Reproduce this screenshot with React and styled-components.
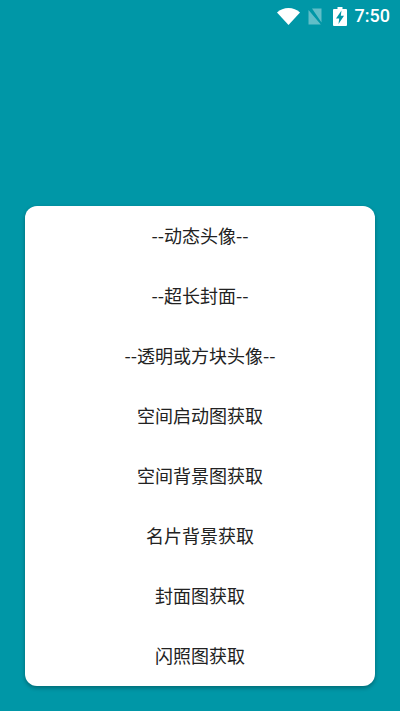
import React from "react";
import styled, { createGlobalStyle } from "styled-components";

const Global = createGlobalStyle`
  html, body { margin: 0; padding: 0; height: 100%; background: #0097a7; }
  #root { height: 100%; }
`;

const Screen = styled.div`
  width: 400px;
  height: 711px;
  background: #0097a7;
  display: flex;
  flex-direction: column;
  overflow: hidden;
  font-family: "Roboto", "Noto Sans CJK SC", sans-serif;
`;

const StatusBar = styled.div`
  height: 32px;
  flex: none;
  display: flex;
  align-items: center;
  justify-content: flex-end;
  padding-right: 10px;
  color: #fff;
`;

const StatusIcon = styled.svg`
  display: block;
  flex: none;
  margin-right: ${(p) => p.$gap}px;
`;

const Clock = styled.span`
  font-size: 18px;
  font-weight: 500;
  line-height: 32px;
`;

const Main = styled.main`
  flex: 1;
  display: flex;
  flex-direction: column;
  justify-content: flex-end;
  padding: 0 25px 25px;
`;

const Card = styled.div`
  background: #fff;
  border-radius: 12px;
  box-shadow: 0 2px 4px rgba(0, 0, 0, 0.3);
  display: flex;
  flex-direction: column;
`;

const Row = styled.div`
  box-sizing: border-box;
  height: 60px;
  padding-bottom: 2px;
  display: flex;
  align-items: center;
  justify-content: center;
  font-family: "Noto Sans CJK SC", sans-serif;
  font-size: 18px;
  line-height: 58px;
  color: #222;
`;

const items = [
  "--动态头像--",
  "--超长封面--",
  "--透明或方块头像--",
  "空间启动图获取",
  "空间背景图获取",
  "名片背景获取",
  "封面图获取",
  "闪照图获取",
];

export default function App() {
  return (
    <Screen>
      <Global />
      <StatusBar>
        <StatusIcon $gap={7} width="23" height="17" viewBox="0 0 23 17">
          <path d="M0 4.4C3.1 1.7 7.1 0 11.5 0S19.900 1.700 23 4.400L11.500 17z" fill="#fff" />
        </StatusIcon>
        <StatusIcon $gap={10} width="16" height="17" viewBox="0 0 16 17">
          <path d="M5 0.500H14.500V14.500zM1.500 2L13.800 16.500H1.500z" fill="#fff" fillOpacity="0.38" />
        </StatusIcon>
        <StatusIcon $gap={8} width="14" height="19" viewBox="0 0 14 19">
          <path d="M4.500 0h5v2H13a1 1 0 0 1 1 1v15a1 1 0 0 1-1 1H1a1 1 0 0 1-1-1V3a1 1 0 0 1 1-1h3.500z" fill="#fff" />
          <path d="M8.500 3.500L3 11.500h3.200L5.500 17 11 8.800H7.800z" fill="#0097a7" />
        </StatusIcon>
        <Clock>7:50</Clock>
      </StatusBar>
      <Main>
        <Card>
          {items.map((t) => (
            <Row key={t}>{t}</Row>
          ))}
        </Card>
      </Main>
    </Screen>
  );
}
